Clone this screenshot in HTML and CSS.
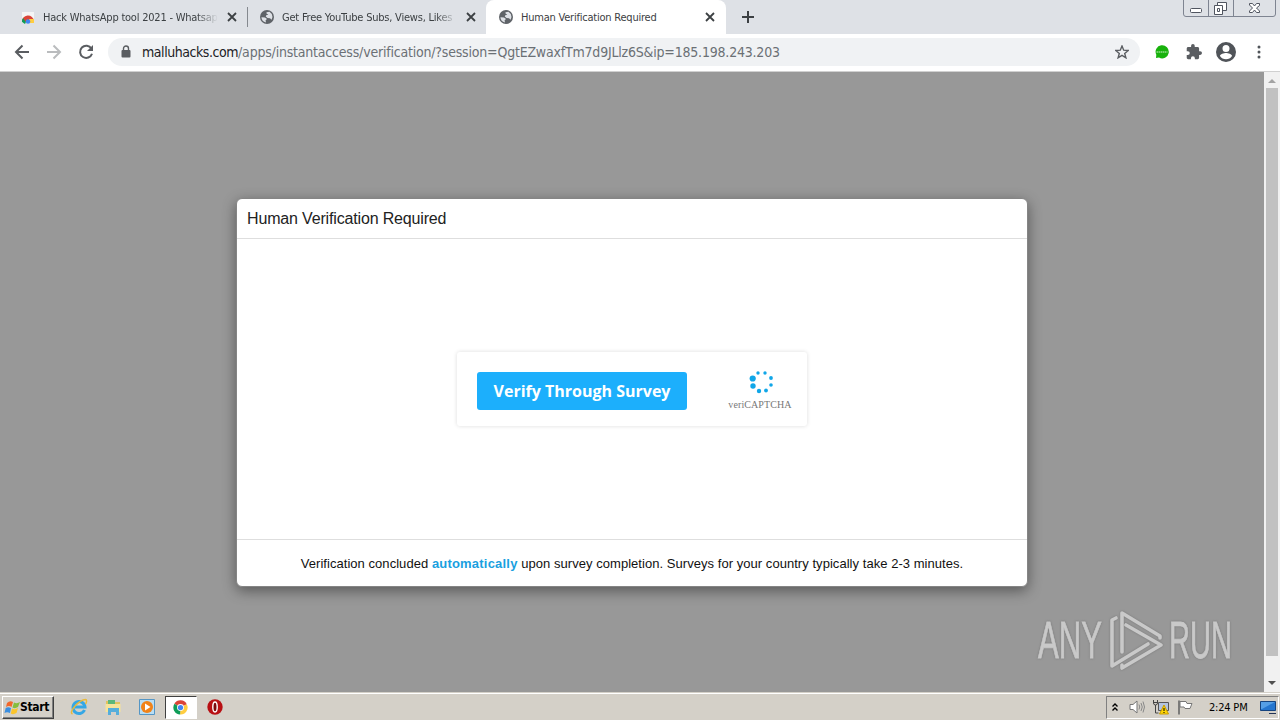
FILE: index.html
```html
<!DOCTYPE html>
<html lang="en">
<head>
<meta charset="utf-8">
<title>Human Verification Required</title>
<link rel="stylesheet" href="styles.css">
</head>
<body>
<svg class="defs" width="0" height="0">
  <symbol id="globe" viewBox="0 0 14 14"><circle cx="7" cy="7" r="7" fill="#5f6368"/><path d="M1.4 7.2 5 7.4 7 9 5.6 10.2 6 12.5C3.200 12 1.500 9.700 1.400 7.200ZM6.500 2.200 9.500 1.800 11.800 4.100 12.500 7 11.600 9.700 10 8.300 7.600 8 5.800 6.400 6.200 5.200 8.300 4.800 6.500 3.600Z" fill="#dee1e6"/></symbol>
  <symbol id="cross" viewBox="0 0 10 10"><path d="M1 1 9 9M9 1 1 9" stroke="#3c4043" stroke-width="1.8"/></symbol>
</svg>
<header class="tabs">
  <div class="tab tab-one">
    <svg class="fav" viewBox="0 0 14 14"><path d="M1 2h12v11H1z" fill="#f5f5f5"/><path d="M1 12a6 6 0 0 1 12-1H8a2 2 0 0 0-3 1Z" fill="#db4437"/><path d="M1 12a6 6 0 0 1 1-4l3 4-1 2Z" fill="#0f9d58"/><path d="M8 9h5v4H8Z" fill="#ffcd40"/><circle cx="7" cy="11.500" r="2.300" fill="#4285f4"/></svg>
    <span class="label fade">Hack WhatsApp tool 2021 - Whatsapp</span>
    <svg class="close"><use href="#cross"/></svg>
  </div>
  <div class="tab tab-two">
    <svg class="fav"><use href="#globe"/></svg>
    <span class="label fade">Get Free YouTube Subs, Views, Likes</span>
    <svg class="close"><use href="#cross"/></svg>
  </div>
  <div class="tab active">
    <svg class="fav"><use href="#globe"/></svg>
    <span class="label">Human Verification Required</span>
    <svg class="close"><use href="#cross"/></svg>
  </div>
  <svg class="plus" viewBox="0 0 12 12"><path d="M6 0V12M0 6H12" stroke="#3c4043" stroke-width="2"/></svg>
  <svg class="winbtns" viewBox="0 0 94 18"><path d="M.5 0V14Q.5 16.500 3 16.500H90Q92.500 16.500 92.500 14V0M25.500 0V16.500M50.500 0V16.500" fill="none" stroke="#7e8491"/><g fill="#fff" stroke="#505560"><rect x="7.500" y="8.500" width="11" height="4" rx="1"/><path d="M34.500 2.500h9v8h-9z"/><path d="M31.500 5.500h8v9h-8z"/><path d="M34.500 8.500h2v3h-2z"/><path d="M66.500 3.500h3l2 2.500 2-2.500h3v2L73.500 8l3 3v1.500h-3l-2-2.500-2 2.500h-3V11l3-3-3-3Z"/></g></svg>
</header>
<nav class="toolbar">
  <svg class="nav" viewBox="0 0 16 16"><path d="M15 8H2M8.500 1.500 2 8l6.500 6.500" fill="none" stroke="#5a5d61" stroke-width="2"/></svg>
  <svg class="nav" viewBox="0 0 16 16"><path d="M1 8H14M7.500 1.500 14 8l-6.500 6.500" fill="none" stroke="#babcbe" stroke-width="2"/></svg>
  <svg class="nav" viewBox="0 0 16 16"><path d="M13.400 4.600A6.100 6.100 0 1 0 14 9.700" fill="none" stroke="#5a5d61" stroke-width="2"/><path d="M15 1V7H9Z" fill="#5a5d61"/></svg>
  <div class="omnibox">
    <svg class="lock" viewBox="0 0 10 13"><rect x=".5" y="5" width="9" height="7.500" rx="1" fill="#5a5d61"/><path d="M2.500 6V3.500a2.500 2.500 0 0 1 5 0V6" fill="none" stroke="#5a5d61" stroke-width="1.400"/></svg>
    <span class="host">malluhacks.com</span><span class="path">/apps/instantaccess/verification/?session=QgtEZwaxfTm7d9JLlz6S&amp;ip=185.198.243.203</span>
    <svg class="star" viewBox="0 0 14 14"><path d="M7 1 8.700 5.200 13.200 5.500 9.700 8.400 10.900 12.800 7 10.400 3.100 12.800 4.300 8.400.8 5.500 5.300 5.200Z" fill="none" stroke="#5a5d61" stroke-width="1.400"/></svg>
  </div>
  <svg class="ext" viewBox="0 0 14 14"><path d="M1 13 1.300 9.800A6.600 6.600 0 1 1 4 12.600Z" fill="#18b20c"/><path d="M1.500 7H12.500" stroke="#8fdb88" stroke-width="1.600" stroke-dasharray="1.500 .5"/></svg>
  <svg class="puzzle" viewBox="1 1 22 22"><path d="M20.500 11H19V7c0-1.100-.9-2-2-2h-4V3.500a2.500 2.500 0 0 0-5 0V5H4c-1.100 0-2 .9-2 2v3.800h1.500a2.700 2.700 0 0 1 0 5.400H2V20c0 1.100.9 2 2 2h3.800v-1.500a2.700 2.700 0 0 1 5.400 0V22H17c1.100 0 2-.9 2-2v-4h1.500a2.500 2.500 0 0 0 0-5z" fill="#5a5d61"/></svg>
  <svg class="user" viewBox="2 2 20 20"><path d="M12 2a10 10 0 1 0 0 20 10 10 0 0 0 0-20zm0 3a3.500 3.500 0 1 1 0 7 3.500 3.500 0 0 1 0-7zm0 14.200a7.200 7.200 0 0 1-6-3.200c0-2 4-3 6-3s6 1 6 3a7.200 7.200 0 0 1-6 3.200z" fill="#505459"/></svg>
  <svg class="dots" viewBox="0 0 4 14"><g fill="#505459"><circle cx="2" cy="2" r="1.500"/><circle cx="2" cy="7" r="1.500"/><circle cx="2" cy="12" r="1.500"/></g></svg>
</nav>
<div class="view">
  <main class="page">
    <section class="dialog">
      <h1 class="title">Human Verification Required</h1>
      <div class="body">
        <div class="captcha">
          <button class="verify">Verify Through Survey</button>
          <div class="brand">
            <svg class="spinner" viewBox="0 0 26 24"><g fill="#10a6e8"><circle cx="3.700" cy="8.500" r="3.100"/><circle cx="4" cy="16" r="2.700"/><circle cx="10" cy="21" r="2.200"/><circle cx="17" cy="20.500" r="1.900"/><circle cx="22" cy="15" r="1.800"/><circle cx="22" cy="8" r="1.900"/><circle cx="16" cy="3" r="1.700"/><circle cx="9" cy="3" r="1.700"/></g></svg>
            <span class="brand-text">veriCAPTCHA</span>
          </div>
        </div>
      </div>
      <footer class="foot"><p class="foot-text">Verification concluded <b class="auto">automatically</b> upon survey completion. Surveys for your country typically take 2-3 minutes.</p></footer>
    </section>
    <div class="watermark">
      <span class="wm wm-any">ANY</span>
      <svg class="wm-logo" viewBox="0 0 56 62"><g fill="none" stroke="#c9c9c9" stroke-width="3.600" stroke-linejoin="round" stroke-linecap="round"><path d="M7 8 3 10V56L39 34"/><path d="M13 42V3L51 26V28M17 15 52 35 13 58V55"/></g></svg>
      <span class="wm wm-run">RUN</span>
    </div>
  </main>
  <aside class="scroll">
    <svg class="arrow" viewBox="0 0 16 16"><path d="M4 11H12L8 7Z" fill="#a3a3a3"/></svg>
    <div class="thumb"></div>
    <svg class="arrow" viewBox="0 0 16 16"><path d="M4 6H12L8 10Z" fill="#505050"/></svg>
  </aside>
</div>
<div class="taskbar">
  <div class="start">
    <svg class="flag" viewBox="0 0 17 17"><path d="M3 4Q6 1 9 3L7.500 8Q5 6 2 8Z" fill="#f2672a"/><path d="M10 3.500Q13 5 16 3L14 8Q11 10 8.500 8.500Z" fill="#86bd3c"/><path d="M1.700 9Q4 7.500 7 9L6 14Q3 12.500.5 14Z" fill="#3a8ee0"/><path d="M8 9.500Q11 11 14 9L12.500 14Q9 16 6.800 14.500Z" fill="#fbc52c"/></svg>
    <span class="start-text">Start</span>
  </div>
  <svg class="app ie" viewBox="0 0 18 18"><path d="M14.500 12A6 6 0 1 1 15 9H5" fill="none" stroke="#35a7e5" stroke-width="3"/><path d="M2.500 16C-2 14 9 2 15.500 1.500 17 1.500 17 4 15.500 6" fill="none" stroke="#e9b93a" stroke-width="1.400"/></svg>
  <svg class="app" viewBox="0 0 18 18"><path d="M2 3h5l1 1h8v10H2z" fill="#e2c25c"/><path d="M4 2h7v4H4z" fill="#5cb77a"/><path d="M1.500 6h15v8h-15z" fill="#f7e39a"/><path d="M4 17V10h11v7h-3v-3H7v3Z" fill="#56aedb"/></svg>
  <svg class="app" viewBox="0 0 18 18"><path d="M1.500 1.500h15v15h-15z" fill="#b9def4" stroke="#5596c5"/><circle cx="9" cy="9" r="6" fill="#f18319"/><path d="M7 5.500 12.500 9 7 12.500Z" fill="#fff"/></svg>
  <div class="current"><svg class="chrome" viewBox="0 0 16 16"><path d="M8 8 1.500 4A7.500 7.500 0 0 1 14.700 4.500Z" fill="#db4437"/><path d="M8 8 14.700 4.500A7.500 7.500 0 0 1 7.500 15.500Z" fill="#ffcd40"/><path d="M8 8 7.500 15.500A7.500 7.500 0 0 1 1.500 4Z" fill="#0f9d58"/><circle cx="8" cy="8" r="3.700" fill="#fff"/><circle cx="8" cy="8" r="2.800" fill="#4285f4"/></svg></div>
  <svg class="app opera" viewBox="0 0 18 18"><circle cx="9" cy="9" r="7.700" fill="#b80f13"/><ellipse cx="9" cy="9" rx="2.200" ry="5" fill="#7c080b" stroke="#fff" stroke-width="1.400"/></svg>
  <div class="tray">
    <svg class="chev" viewBox="0 0 8 10"><path d="M1.500 4 4 1.500 6.500 4M1.500 8 4 5.500 6.500 8" fill="none" stroke="#000" stroke-width="1.400"/></svg>
    <svg class="ico" viewBox="0 0 16 16"><path d="M1 5.500H4L8 2V14L4 10.500H1Z" fill="#fff" stroke="#777"/><path d="M10 5.500Q11.500 8 10 10.500M12 4Q14.500 8 12 12M14 2.500Q17 8 14 13.500" fill="none" stroke="#888"/></svg>
    <svg class="ico" viewBox="0 0 16 16"><path d="M5.500 3.500h10v8h-10z" fill="#b4c4de" stroke="#555"/><path d="M.5 1v3q0 2 2 2v8h3M4.500 1v3q0 2-2 2M.5 3.500h4" fill="none" stroke="#444"/><path d="M11 6 15.500 15H6.500Z" fill="#ffd500" stroke="#c79a00"/><path d="M11 9v3m0 1v1" stroke="#000"/></svg>
    <svg class="ico" viewBox="0 0 16 16"><path d="M2 1.500V15.500" stroke="#666" stroke-width="1.600"/><path d="M3 2.500h6l1 2h5l-2 5H8l-1-1.500H3Z" fill="#fff" stroke="#777"/></svg>
    <span class="clock">2:24 PM</span>
    <svg class="ico screen" viewBox="0 0 16 16"><path d="M.5 2.500h15v9h-15z" fill="#2576cf" stroke="#16447f"/><path d="M1 3h14L2 10H1Z" fill="#559fe6"/><path d="M9 14.500h7" stroke="#235"/></svg>
  </div>
</div>
</body>
</html>
```
FILE: styles.css
```css
* { box-sizing: border-box; }
body { margin: 0; width: 1280px; height: 720px; overflow: hidden; display: flex; flex-direction: column; font-family: "DejaVu Sans Condensed", "DejaVu Sans", sans-serif; font-stretch: condensed; }
svg { display: block; flex: none; }
.defs { position: absolute; }
.tabs { height: 34px; background: #dee1e6; display: flex; align-items: center; }
.tab { height: 34px; display: flex; align-items: center; font-size: 11px; color: #3c4043; }
.tab-one { width: 248px; padding-left: 21px; }
.tab-one::after { content: ""; width: 1px; height: 20px; margin-left: 10px; background: #85898f; }
.tab-two { width: 238px; padding: 0 10px 0 12px; }
.active { width: 240px; padding: 0 11px 0 13px; background: #fff; border-radius: 8px 8px 0 0; }
.fav { width: 14px; height: 14px; margin-right: 8px; }
.label { flex: 1; white-space: nowrap; overflow: hidden; letter-spacing: -0.22px; line-height: 16px; padding-top: 1px; }
.fade { flex: none; width: 175px; -webkit-mask-image: linear-gradient(90deg, #000 88%, transparent); mask-image: linear-gradient(90deg, #000 88%, transparent); }
.close { width: 10px; height: 10px; margin-left: auto; }
.plus { width: 12px; height: 12px; margin-left: 16px; }
.winbtns { width: 94px; height: 18px; margin-left: auto; margin-right: 3px; align-self: flex-start; }
.toolbar { height: 38px; padding: 0 19px 2px 14px; background: #fff; border-bottom: 1px solid #d0d0d0; display: flex; align-items: center; }
.nav { width: 16px; height: 16px; margin-right: 16px; }
.omnibox { width: 1032px; height: 28px; margin-left: -2px; padding: 0 11px 0 13px; border-radius: 14px; background: #f0f2f4; display: flex; align-items: center; font-size: 14px; white-space: nowrap; }
.lock { width: 10px; height: 13px; margin-right: 11px; }
.host { color: #202124; letter-spacing: -0.45px; }
.path { color: #6b7075; letter-spacing: -0.2px; }
.star { width: 14px; height: 14px; margin-left: auto; }
.ext { width: 14px; height: 14px; margin-left: 15px; }
.puzzle { width: 16px; height: 16px; margin-left: 17px; }
.user { width: 20px; height: 20px; margin-left: 14px; }
.dots { width: 4px; height: 14px; margin-left: auto; }
.view { height: 620px; display: flex; }
.page { position: relative; width: 1264px; background: #989898; padding: 126px 236px 0; }
.dialog { width: 792px; height: 389px; border: 1px solid #858585; border-radius: 6px; background: #fff; box-shadow: 0 4px 14px rgba(0,0,0,.42); font-family: "Liberation Sans", sans-serif; display: flex; flex-direction: column; }
.title { height: 40px; margin: 0; padding-left: 10px; border-bottom: 1px solid #dedede; font-size: 16px; font-weight: 400; line-height: 39px; letter-spacing: -.16px; color: #222; }
.body { height: 300px; display: flex; align-items: center; justify-content: center; }
.captcha { width: 350px; height: 74px; background: #fff; border-radius: 3px; box-shadow: 0 0 4px rgba(0,0,0,.14); padding: 0 14px 0 20px; display: flex; align-items: center; justify-content: space-between; }
.verify { width: 210px; height: 38px; margin-top: 4px; border: 0; border-radius: 3px; padding: 0; background: #1caffc; color: #fff; font: 700 16px/38px "Open Sans", "Noto Sans", sans-serif; white-space: nowrap; }
.brand { width: 66px; display: flex; flex-direction: column; align-items: center; }
.spinner { width: 26px; height: 24px; margin: 2px 0 0 3px; }
.brand-text { font: 10px/12px "Liberation Serif", serif; letter-spacing: .1px; color: #777; margin-top: 5px; }
.foot { height: 47px; border-top: 1px solid #dedede; text-align: center; }
.foot-text { margin: 0; font-size: 13px; line-height: 48px; letter-spacing: .045px; color: #111; white-space: nowrap; }
.auto { color: #1a9fe0; letter-spacing: .2px; }
.watermark { position: absolute; left: 1038px; top: 538px; display: flex; align-items: center; filter: drop-shadow(0 0 1px #777); }
.wm { width: 64px; height: 62px; font: 400 51px/62px "Liberation Sans", sans-serif; color: #c9c9c9; -webkit-text-stroke: .8px #c9c9c9; transform-origin: 0 50%; transform: scaleX(.61); }
.wm-run { transform: scaleX(.57); }
.wm-logo { width: 56px; height: 62px; margin: 0 4px 0 7px; }
.scroll { width: 16px; background: #f1f1f1; display: flex; flex-direction: column; align-items: center; }
.arrow { width: 16px; height: 16px; }
.thumb { width: 12px; height: 568px; margin-bottom: 19px; background: #c1c1c1; }
.taskbar { height: 28px; background: #d4d0c8; border-top: 1px solid #d4d0c8; box-shadow: inset 0 1px #fff; padding: 2px 1px 1px 2px; display: flex; align-items: center; }
.start { width: 52px; height: 23px; border: 1px solid; border-color: #fff #404040 #404040 #fff; box-shadow: inset -1px -1px #808080; display: flex; align-items: center; padding-left: 1px; }
.flag { width: 17px; height: 17px; margin-right: -1px; }
.start-text { font-size: 12px; font-weight: 700; letter-spacing: -.35px; }
.app { width: 18px; height: 18px; margin-left: 16px; }
.ie { margin-left: 16px; }
.current { width: 32px; height: 23px; margin-left: 9px; background: #fff; border: 1px solid; border-color: #404040 #fff #fff #404040; display: flex; align-items: center; justify-content: center; }
.chrome { width: 15px; height: 15px; margin-right: 1px; }
.opera { margin-left: 9px; }
.tray { width: 173px; height: 23px; margin-left: auto; border: 1px solid; border-color: #808080 #fff #fff #808080; display: flex; align-items: center; padding-left: 4px; }
.chev { width: 8px; height: 11px; margin-right: 10px; }
.ico { width: 16px; height: 16px; margin-right: 8px; }
.clock { width: 40px; margin-left: 8px; font-size: 11px; letter-spacing: -.2px; white-space: nowrap; }
.screen { margin: 0 0 0 11px; }
```
